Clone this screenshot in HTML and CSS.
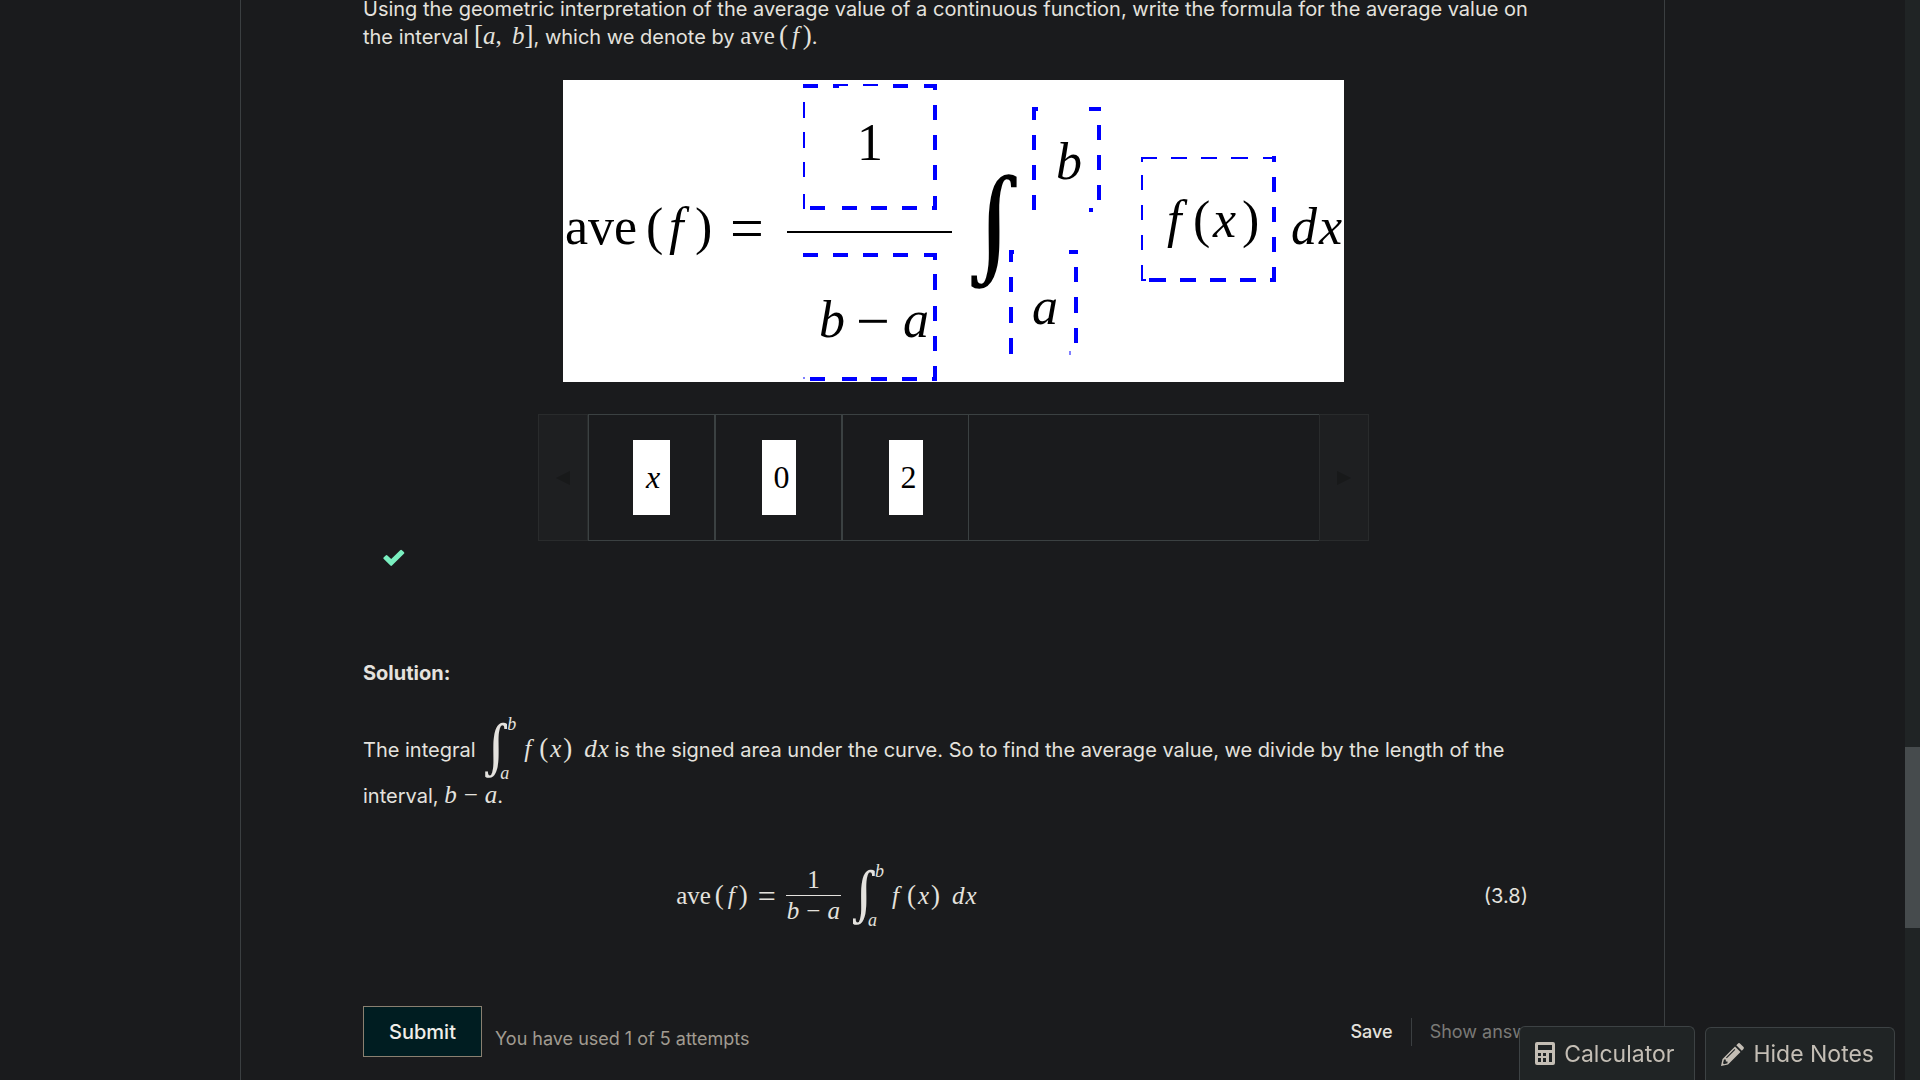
FILE: index.html
```html
<!DOCTYPE html>
<html lang="en">
<head>
<meta charset="utf-8">
<title>Average value of a function</title>
<meta name="viewport" content="width=device-width, initial-scale=1">
<link rel="stylesheet" href="styles.css">
</head>
<body>
<div class="viewport">
  <main class="page">
    <section class="problem">
      <p class="prompt">Using the geometric interpretation of the average value of a continuous function, write the formula for the average value on the interval <span class="math"><span class="fence">[</span><i>a</i>,&nbsp;<span class="thin"></span><i>b</i><span class="fence">]</span></span>, which we denote by <span class="math">ave<span class="thin"></span><span class="fence">(</span><i class="f">f</i><span class="fence">)</span></span>.</p>

      <svg class="board" viewBox="0 0 781 302" role="img" aria-label="Formula with answers placed in the drop targets">
        <rect width="781" height="302" fill="#fff"/>
        <g fill="none" stroke="#00f" stroke-width="4">
          <!-- numerator target -->
          <path d="M240 6h15M330 6h15M361 6h13M372 4v6M372 25v15M372 55v15M372 85v15M372 116v13M247 128h15M279 128h15M308 128h16M339 128h15M369 128h5"/>
          <path stroke-width="2" d="M270 5h15M300 5h15M270 7h6M241 22v16M241 52v16M241 82v15M241 114v15"/>
          <!-- denominator target -->
          <path d="M240 175h15M270 175h15M300 175h15M330 175h15M361 175h13M372 173v7M372 194v16M372 226v15M372 256v15M372 286v15M247 299h15M279 299h15M308 299h16M339 299h15M369 299h5"/>
          <path stroke-width="1" d="M240 298h2"/>
          <!-- upper limit target -->
          <path d="M471 28v12M471 55v15M471 85v15M471 115v15M469 29h6M526 29h12M536 45v15M536 75v15M536 105v15M526 130h4"/>
          <!-- lower limit target -->
          <path d="M448 170v12M448 197v15M448 227v16M448 258v16M446 172h5M506 172h9M513 187v15M513 217v16M513 248v15"/>
          <path stroke-width="1" d="M507 271v4"/>
          <!-- integrand target -->
          <path d="M711 76v6M711 97v15M711 127v15M711 157v15M711 187v15M586 200h17M617 200h16M647 200h16M677 200h16M707 200h6"/>
          <path stroke-width="2" d="M578 78h16M608 78h16M638 78h16M668 78h17M700 78h13M579 77v5M579 95v15M579 125v15M579 155v15M579 185v16M579 200h4"/>
        </g>
        <path d="M224 152h165" stroke="#000" stroke-width="2"/>
        <g class="board-text">
          <text x="2" y="164">ave</text>
          <text x="83" y="164">(</text>
          <text x="106" y="164" font-style="italic">f</text>
          <text x="132" y="164">)</text>
          <text x="167" y="168" class="relation">=</text>
          <text x="294" y="80">1</text>
          <text x="256" y="257" font-style="italic">b</text>
          <text x="293" y="261" class="relation">−</text>
          <text x="340" y="257" font-style="italic">a</text>
          <text x="400" y="180" class="board-integral">∫</text>
          <text x="493" y="99" font-style="italic">b</text>
          <text x="469" y="244" font-style="italic">a</text>
          <text x="604" y="157" font-style="italic">f</text>
          <text x="630" y="157">(</text>
          <text x="650" y="157" font-style="italic">x</text>
          <text x="679" y="157">)</text>
          <text x="728" y="164" font-style="italic">d</text>
          <text x="756" y="164" font-style="italic">x</text>
        </g>
      </svg>

      <div class="bank">
        <button class="bank-arrow" type="button" aria-label="Previous items" disabled>
          <svg width="14" height="16" viewBox="0 0 14 16"><path d="M14 1v14L0 8z"/></svg>
        </button>
        <ul class="bank-items">
          <li class="bank-item"><span class="tile variable">x</span></li>
          <li class="bank-item"><span class="tile">0</span></li>
          <li class="bank-item"><span class="tile">2</span></li>
        </ul>
        <button class="bank-arrow" type="button" aria-label="Next items" disabled>
          <svg width="14" height="16" viewBox="0 0 14 16"><path d="M0 1v14l14-7z"/></svg>
        </button>
      </div>

      <div class="status">
        <svg width="22" height="18" viewBox="0 0 22 18" role="img" aria-label="Correct"><path fill="#7aefc0" d="M9 16.600q-.8.700-1.600 0L.800 10q-.9-.9 0-1.700L2.700 6.400q.9-.8 1.700 0L8.200 10.100 17.200 1.200q.9-.8 1.700 0L20.900 3.100q.8.900 0 1.700z"/></svg>
      </div>

      <h3 class="solution-title">Solution:</h3>
      <p class="solution">The integral <span class="math"><span class="integral"><span class="sign">∫</span><i class="upper">b</i><i class="lower">a</i></span><i class="f">f</i><span class="thin"></span><span class="fence">(</span><i class="x">x</i><span class="fence">)</span><span class="gap"></span><i class="d">d</i><i>x</i></span> is the signed area under the curve. So to find the average value, we divide by the length of the interval, <span class="math"><i>b</i><span class="minus">−</span><i>a</i></span>.</p>

      <div class="equation">
        <div class="formula math">
          <span>ave<span class="thin"></span><span class="fence">(</span><i class="f">f</i><span class="fence">)</span></span>
          <span class="equals">=</span>
          <span class="fraction"><span class="num">1</span><span class="den"><i>b</i><span class="minus">−</span><i>a</i></span></span>
          <span class="integral"><span class="sign">∫</span><i class="upper">b</i><i class="lower">a</i></span>
          <span><i class="f">f</i><span class="thin"></span><span class="fence">(</span><i class="x">x</i><span class="fence">)</span><span class="gap"></span><i class="d">d</i><i>x</i></span>
        </div>
        <span class="number">(3.8)</span>
      </div>

      <div class="actions">
        <button class="submit" type="button">Submit</button>
        <span class="attempts">You have used 1 of 5 attempts</span>
        <button class="link-button save" type="button">Save</button>
        <button class="link-button show" type="button" disabled>Show answer</button>
      </div>
    </section>
  </main>
  <div class="scrollbar"><div class="thumb"></div></div>
  <div class="tools">
    <button class="tool calculator" type="button">
      <svg width="20" height="23" viewBox="0 0 20 23" aria-hidden="true"><path fill="currentColor" fill-rule="evenodd" d="M2 0h16q2 0 2 2v19q0 2-2 2H2q-2 0-2-2V2q0-2 2-2zM3 3v5h14V3zM3 11v3h3v-3zM8 11v3h3v-3zM3 16v4h3v-4zM8 16v4h3v-4zM14 11v9h3v-9z"/></svg>
      Calculator
    </button>
    <button class="tool notes" type="button">
      <svg width="23" height="23" viewBox="0 0 23 23" aria-hidden="true"><path fill="currentColor" fill-rule="evenodd" d="M14 3.500 19.500 9 7 21.500 0 23l1.500-7zM15.300 2.200 16.800.700q1.200-1.200 2.400 0l3.100 3.100q1.200 1.200 0 2.400l-1.500 1.500zM13.500 6 5 14.500l.8.800L14.300 6.800zM3 16.500 2 20.200l1 1 3.500-1v-1.700H4.800v-2z"/></svg>
      Hide Notes
    </button>
  </div>
</div>
</body>
</html>
```
FILE: styles.css
```css
* { box-sizing: border-box; }

body {
  margin: 0;
  overflow: hidden;
  background: #1a1b1d;
  color: #e4e2de;
  font: 20px/28px Inter, "Liberation Sans", sans-serif;
}

button {
  margin: 0;
  padding: 0;
  border: 0;
  background: none;
  color: inherit;
  font: inherit;
}

p, h3, ul { margin: 0; }

.viewport {
  display: flex;
  height: 100vh;
  overflow: hidden;
}

.page {
  flex: 1;
  display: flex;
  justify-content: center;
  padding: 0 240px;
}

.problem {
  flex: 1;
  height: max-content;
  min-height: 100vh;
  margin-top: -5px;
  padding: 0 120px 40px 122px;
  border: solid #3b3f41;
  border-width: 0 1px;
}

/* Inline mathematics */
.math {
  font-family: "Liberation Serif", serif;
  font-size: 25px;
  line-height: 24px;
  white-space: nowrap;
}
.fence { font-size: 27px; }
.f { padding: 0 4px; }
.x { padding: 0 2px; }
.d { padding-right: 1px; }
.thin { padding-left: 4px; }
.gap { padding-left: 12px; }
.minus { padding: 0 7px; }

.integral {
  display: inline-grid;
  grid-template: 34px 33px / 19px 20px;
  height: 67px;
  vertical-align: -7px;
  font-size: 18px;
  line-height: 18px;
}
.sign {
  grid-row: 1 / 3;
  align-self: center;
  font-family: "DejaVu Math TeX Gyre", "Liberation Serif", serif;
  font-size: 50px;
  line-height: 60px;
}
.upper { grid-column: 2; padding-left: 7px; }
.lower { grid-column: 2; align-self: end; }

/* Drop target picture */
.board {
  display: block;
  width: 781px;
  max-width: 100%;
  margin: 29px auto 32px;
}
.board-text {
  font-family: "Liberation Serif", serif;
  font-size: 52px;
}
.relation { font-size: 60px; }
.board-integral {
  font-family: "DejaVu Math TeX Gyre", "Liberation Serif", serif;
  font-size: 104px;
}

/* Item bank */
.bank {
  display: flex;
  width: 831px;
  max-width: 100%;
  height: 127px;
  margin: 0 auto;
}
.bank-arrow {
  display: flex;
  align-items: center;
  justify-content: center;
  width: 50px;
  border: 1px solid #292b2c;
  background: #1e1f21;
  fill: #18191a;
}
.bank-items {
  flex: 1;
  display: flex;
  padding: 0;
  border: solid #3b4142;
  border-width: 1px 0;
  list-style: none;
}
.bank-item {
  display: flex;
  align-items: center;
  justify-content: center;
  width: 127px;
  border: solid #3b4142;
  border-width: 0 1px;
}
.tile {
  padding: 0 6px 0 12px;
  background: #fff;
  color: #000;
  font-family: "Liberation Serif", serif;
  font-size: 32px;
  line-height: 75px;
}
.variable { padding: 0 10px 0 13px; font-style: italic; }

.status {
  height: 88px;
  padding: 8px 20px;
  line-height: 18px;
}

.solution-title {
  margin: 30px 0 28px;
  font-size: 20px;
  font-weight: 700;
}

/* Numbered equation */
.equation {
  display: flex;
  align-items: center;
  margin-top: 52px;
  padding-right: 16px;
}
.formula {
  flex: 1;
  display: flex;
  align-items: center;
  justify-content: center;
  padding-right: 194px;
}
.equals { padding: 0 10px; font-size: 32px; }
.fraction { margin-right: 8px; text-align: center; }
.num, .den { display: block; padding: 3px 1px; }
.num { border-bottom: 1px solid; }

/* Action row */
.actions {
  display: flex;
  align-items: center;
  margin-top: 77px;
}
.submit {
  width: 119px;
  height: 51px;
  border: 1px solid #8a8070;
  background: #001d21;
  color: #f0eee9;
  font-weight: 500;
}
.attempts {
  flex: 1;
  padding: 14px 0 0 13px;
  color: #a19b91;
  font-size: 18px;
}
.link-button { font-size: 18px; font-weight: 500; }
.save { padding-right: 18px; border-right: 1px solid #3b3f41; }
.show { padding-left: 18px; color: #7a7a77; font-weight: 400; }

.scrollbar {
  width: 15px;
  padding-top: 747px;
  background: #202425;
}
.thumb { height: 181px; background: #464b4d; }

/* Floating tools over the lower edge */
.tools {
  position: fixed;
  right: 25px;
  bottom: 0;
  display: flex;
  align-items: flex-end;
  gap: 10px;
}
.tool {
  display: flex;
  align-items: center;
  gap: 9px;
  height: 53px;
  padding: 0 20px 0 15px;
  border: 1px solid #3d4244;
  border-bottom: 0;
  border-radius: 6px 6px 0 0;
  background: #202425;
  color: #c4beb5;
  font-size: 23px;
}
.calculator { height: 54px; }
```
